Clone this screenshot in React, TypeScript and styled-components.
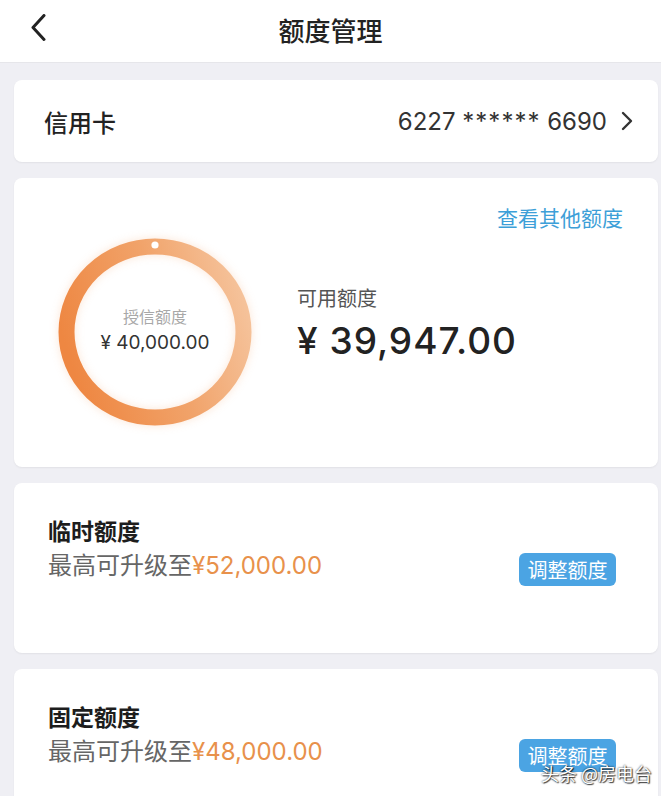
import React from "react";
import styled, { createGlobalStyle } from "styled-components";

const GlobalStyle = createGlobalStyle`
  html, body {
    margin: 0;
    padding: 0;
    background: #efeff4;
    overflow: hidden;
  }
  body {
    font-family: "Inter", "Noto Sans CJK SC", sans-serif;
    color: #222;
  }
`;

const Page = styled.div`
  width: 661px;
  height: 796px;
  background: #efeff4;
  position: relative;
  overflow: hidden;
  display: flex;
  flex-direction: column;
`;

const Header = styled.header`
  height: 63px;
  flex-shrink: 0;
  background: #fff;
  border-bottom: 1px solid #e6e6ea;
  box-sizing: border-box;
  display: grid;
  grid-template-columns: 80px 1fr 80px;
  align-items: center;
`;

const BackButton = styled.div`
  display: flex;
  align-items: center;
  padding-left: 30px;
  height: 100%;
  padding-bottom: 6px;
  box-sizing: border-box;
`;

const Title = styled.h1`
  margin: 0;
  text-align: center;
  font-family: "Noto Sans CJK SC", sans-serif;
  font-size: 26px;
  font-weight: 500;
  color: #222;
  line-height: 30px;
  padding-bottom: 2px;
`;

const List = styled.main`
  flex-shrink: 0;
  display: flex;
  flex-direction: column;
  gap: 16px;
  padding: 17px 3px 0 14px;
`;

const Card = styled.section<{ $height: number }>`
  background: #fff;
  border-radius: 8px;
  box-shadow: 0 1px 2px rgba(0, 0, 0, 0.06);
  height: ${(p) => p.$height}px;
  box-sizing: border-box;
  flex-shrink: 0;
`;

const CardRow = styled(Card)`
  display: flex;
  align-items: center;
  justify-content: space-between;
  padding: 0 25px 0 30px;
`;

const CardLabel = styled.span`
  font-family: "Noto Sans CJK SC", sans-serif;
  font-size: 24px;
  font-weight: 500;
  color: #222;
`;

const CardNumber = styled.span`
  display: flex;
  align-items: center;
  gap: 14px;
  font-size: 24px;
  color: #333;
`;

const Stars = styled.span`
  letter-spacing: 1px;
`;

const QuotaCard = styled(Card)`
  display: flex;
  flex-direction: column;
  padding: 24px 35px 0 44px;
`;

const LinkRow = styled.div`
  display: flex;
  justify-content: flex-end;
`;

const Link = styled.a`
  font-family: "Noto Sans CJK SC", sans-serif;
  font-size: 21px;
  line-height: 30px;
  color: #3d9fd8;
  text-decoration: none;
`;

const QuotaRow = styled.div`
  display: flex;
  align-items: flex-start;
  gap: 45px;
  margin-top: 6px;
`;

const Ring = styled.div`
  display: grid;
  width: 194px;
  height: 188px;
  & > * {
    grid-area: 1 / 1;
  }
`;

const RingSvg = styled.svg`
  overflow: visible;
  filter: drop-shadow(0 0 5px rgba(240, 140, 70, 0.22));
`;

const RingText = styled.div`
  display: flex;
  flex-direction: column;
  align-items: center;
  justify-content: center;
  padding-bottom: 4px;
`;

const RingLabel = styled.span`
  font-family: "Noto Sans CJK SC", sans-serif;
  font-size: 16px;
  line-height: 22px;
  color: #a8a8a8;
`;

const RingValue = styled.span`
  font-size: 19px;
  line-height: 26px;
  margin-top: 3px;
  color: #333;
`;

const Available = styled.div`
  display: flex;
  flex-direction: column;
  margin-top: 46px;
`;

const AvailLabel = styled.span`
  font-family: "Noto Sans CJK SC", sans-serif;
  font-size: 20px;
  line-height: 28px;
  color: #555;
`;

const AvailValue = styled.span`
  font-size: 37px;
  line-height: 44px;
  margin-top: 7px;
  color: #222;
  font-weight: 500;
  letter-spacing: 1px;
`;

const LimitCard = styled(Card)`
  display: flex;
  flex-direction: column;
  padding: 31px 42px 0 34px;
`;

const LimitTitle = styled.h2`
  margin: 0;
  font-family: "Noto Sans CJK SC", sans-serif;
  font-size: 23px;
  line-height: 32px;
  font-weight: 700;
  color: #1d1d1d;
`;

const LimitRow = styled.div`
  display: flex;
  justify-content: space-between;
  align-items: center;
  margin-top: 1px;
`;

const LimitText = styled.span`
  font-size: 24px;
  line-height: 32px;
  color: #666;
  margin-top: -4px;
`;

const Cn = styled.span`
  font-family: "Noto Sans CJK SC", sans-serif;
`;

const Amount = styled.span`
  color: #e8914b;
`;

const AdjustButton = styled.button`
  border: none;
  background: #4ba4e3;
  color: #fff;
  font-family: "Noto Sans CJK SC", sans-serif;
  font-size: 20px;
  line-height: 33px;
  height: 33px;
  width: 97px;
  padding: 0;
  border-radius: 6px;
  margin-top: 6px;
`;

const Watermark = styled.div`
  position: absolute;
  left: 541px;
  top: 761px;
  font-family: "Noto Sans CJK SC", sans-serif;
  font-size: 18px;
  line-height: 24px;
  color: #fff;
  text-shadow: 0 0 2px rgba(0, 0, 0, 0.9), 1px 1px 1px rgba(0, 0, 0, 0.7);
  white-space: nowrap;
`;

const ChevronLeft = () => (
  <svg width="16" height="28" viewBox="0 0 16 28">
    <polyline
      points="14,1.5 3,13.5 14,25.5"
      fill="none"
      stroke="#222"
      strokeWidth="3"
      strokeLinecap="round"
      strokeLinejoin="round"
    />
  </svg>
);

const ChevronRight = () => (
  <svg width="12" height="20" viewBox="0 0 12 20">
    <polyline
      points="2,2 10,10 2,18"
      fill="none"
      stroke="#333"
      strokeWidth="2.4"
      strokeLinecap="round"
      strokeLinejoin="round"
    />
  </svg>
);

const limits = [
  { title: "临时额度", amount: "¥52,000.00" },
  { title: "固定额度", amount: "¥48,000.00" },
];

export default function App() {
  return (
    <Page>
      <GlobalStyle />
      <Header>
        <BackButton>
          <ChevronLeft />
        </BackButton>
        <Title>额度管理</Title>
        <div />
      </Header>
      <List>
        <CardRow $height={82}>
          <CardLabel>信用卡</CardLabel>
          <CardNumber>
            <span>
              6227 <Stars>******</Stars> 6690
            </span>
            <ChevronRight />
          </CardNumber>
        </CardRow>
        <QuotaCard $height={289}>
          <LinkRow>
            <Link>查看其他额度</Link>
          </LinkRow>
          <QuotaRow>
            <Ring>
              <RingSvg width="194" height="188" viewBox="0 0 194 188">
                <defs>
                  <linearGradient id="ringGrad" x1="0" y1="0.6" x2="1" y2="0.3">
                    <stop offset="0" stopColor="#ee8742" />
                    <stop offset="0.55" stopColor="#f1a36a" />
                    <stop offset="1" stopColor="#f5c29a" />
                  </linearGradient>
                </defs>
                <ellipse
                  cx="97"
                  cy="94"
                  rx="88.5"
                  ry="85.5"
                  fill="none"
                  stroke="url(#ringGrad)"
                  strokeWidth="16"
                />
                <circle cx="97" cy="7" r="3.6" fill="#fff" />
              </RingSvg>
              <RingText>
                <RingLabel>授信额度</RingLabel>
                <RingValue>¥ 40,000.00</RingValue>
              </RingText>
            </Ring>
            <Available>
              <AvailLabel>可用额度</AvailLabel>
              <AvailValue>¥ 39,947.00</AvailValue>
            </Available>
          </QuotaRow>
        </QuotaCard>
        {limits.map((l) => (
          <LimitCard $height={170} key={l.title}>
            <LimitTitle>{l.title}</LimitTitle>
            <LimitRow>
              <LimitText>
                <Cn>最高可升级至</Cn>
                <Amount>{l.amount}</Amount>
              </LimitText>
              <AdjustButton>调整额度</AdjustButton>
            </LimitRow>
          </LimitCard>
        ))}
      </List>
      <Watermark>头条 @房电台</Watermark>
    </Page>
  );
}
